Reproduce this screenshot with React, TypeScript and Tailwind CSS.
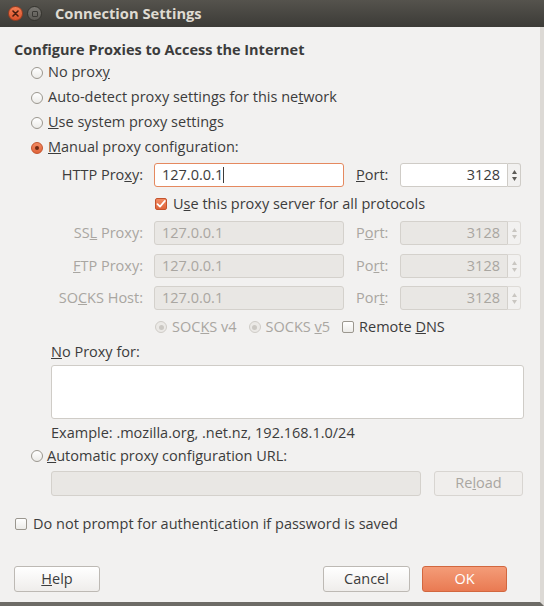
import React from 'react';

const font = { fontFamily: '"Open Sans", "Noto Sans", sans-serif' };

const Radio: React.FC<{ checked?: boolean; disabled?: boolean }> = ({ checked, disabled }) => {
  if (checked) {
    return (
      <span className="w-[12px] h-[12px] rounded-full border border-[#c4532c] bg-gradient-to-b from-[#f28a62] to-[#e0643a] flex items-center justify-center shrink-0">
        <span className="w-[4px] h-[4px] rounded-full bg-[#6e2a14]" />
      </span>
    );
  }
  return (
    <span
      className={`w-[12px] h-[12px] rounded-full border shrink-0 flex items-center justify-center ${
        disabled ? 'border-[#cfccc7] bg-[#ebe9e6]' : 'border-[#9b978f] bg-gradient-to-b from-white to-[#ecebe8]'
      }`}
    >
      {disabled && <span className="w-[5px] h-[5px] rounded-full bg-[#cbc8c3]" />}
    </span>
  );
};

const Checkbox: React.FC<{ checked?: boolean }> = ({ checked }) => {
  if (checked) {
    return (
      <span className="w-[12px] h-[12px] rounded-[2px] border border-[#c4532c] bg-gradient-to-b from-[#f28a62] to-[#e0643a] flex items-center justify-center shrink-0">
        <svg width="10" height="10" viewBox="0 0 10 10">
          <path d="M1.5 5.2 L4 7.6 L8.8 2" fill="none" stroke="#fff" strokeWidth="1.8" strokeLinecap="round" strokeLinejoin="round" />
        </svg>
      </span>
    );
  }
  return <span className="block w-[12px] h-[12px] rounded-[2px] border border-[#9b978f] bg-gradient-to-b from-white to-[#ecebe8] shrink-0" />;
};

const Spinner: React.FC<{ disabled?: boolean }> = ({ disabled }) => (
  <div
    className={`w-[13px] h-full flex flex-col items-center justify-center gap-[3px] rounded-r-[3px] border border-l-0 ${
      disabled ? 'border-[#dedbd7] text-[#c9c6c1]' : 'border-[#cfccc7] text-[#5c5a56]'
    }`}
  >
    <svg width="5" height="4" viewBox="0 0 5 4"><path d="M0 4 L2.5 0 L5 4Z" fill="currentColor" /></svg>
    <svg width="5" height="4" viewBox="0 0 5 4"><path d="M0 0 L2.5 4 L5 0Z" fill="currentColor" /></svg>
  </div>
);

const ProxyRow: React.FC<{ label: React.ReactNode; port: React.ReactNode; mt: string }> = ({ label, port, mt }) => (
  <div className={`flex items-center h-[24px] ${mt}`}>
    <div className="w-[129px] text-right text-[#a9a6a1]">{label}</div>
    <div className="ml-[11px] w-[190px] h-full rounded-[3px] border border-[#d4d1cc] bg-[#e9e7e4] flex items-center px-[7px] text-[#a9a6a1]">
      127.0.0.1
    </div>
    <div className="ml-[12px] w-[44px] text-[#a9a6a1]">{port}</div>
    <div className="w-[108px] h-full rounded-l-[3px] border border-[#d4d1cc] bg-[#e9e7e4] flex items-center justify-end px-[7px] text-[#a9a6a1]">
      3128
    </div>
    <Spinner disabled />
  </div>
);

const Button: React.FC<{ children: React.ReactNode; width: string; primary?: boolean }> = ({ children, width, primary }) => (
  <div
    className={`${width} h-[26px] rounded-[3px] border flex items-center justify-center ${
      primary
        ? 'border-[#d2673f] bg-gradient-to-b from-[#f49c78] to-[#e97a52] text-white'
        : 'border-[#bdb9b4] bg-gradient-to-b from-white to-[#efedeb] text-[#3c3c3c]'
    }`}
  >
    {children}
  </div>
);

export default function App() {
  return (
    <div style={font} className="w-[544px] h-[606px] bg-[#f2f1f0] text-[14.5px] text-[#3c3c3c] flex flex-col overflow-hidden leading-none">
      <div className="h-[27px] shrink-0 bg-gradient-to-b from-[#55534d] to-[#3c3b37] flex items-center">
        <span className="ml-[8px] w-[15px] h-[15px] rounded-full bg-gradient-to-b from-[#f37d53] to-[#d9512a] border border-[#9a3d20] flex items-center justify-center">
          <svg width="7" height="7" viewBox="0 0 7 7">
            <path d="M1 1 L6 6 M6 1 L1 6" stroke="#4a1d0e" strokeWidth="1.6" strokeLinecap="round" />
          </svg>
        </span>
        <span className="ml-[4px] w-[15px] h-[15px] rounded-full bg-gradient-to-b from-[#7a7873] to-[#5c5a55] border border-[#35342f] flex items-center justify-center">
          <span className="w-[6px] h-[6px] border border-[#3a3935] rounded-[1px]" />
        </span>
        <span className="ml-[13px] font-bold text-[#dfdbd2] text-[14.7px]">Connection Settings</span>
      </div>

      <div className="flex-1 flex border-r-[4px] border-r-[#dcd9d5] border-b-[4px] border-b-[#6d6b66]">
        <div className="flex-1 flex flex-col pl-[14px] pt-[13px]">
          <div className="h-[20px] flex items-center font-bold">Configure Proxies to Access the Internet</div>

          <div className="pl-[17px]">
            <div className="h-[25px] flex items-center gap-[5px]">
              <Radio />
              <span>No prox<u>y</u></span>
            </div>
            <div className="h-[25px] flex items-center gap-[5px]">
              <Radio />
              <span>Auto-detect proxy settings for this ne<u>t</u>work</span>
            </div>
            <div className="h-[25px] flex items-center gap-[5px]">
              <Radio />
              <span><u>U</u>se system proxy settings</span>
            </div>
            <div className="h-[25px] flex items-center gap-[5px]">
              <Radio checked />
              <span><u>M</u>anual proxy configuration:</span>
            </div>
          </div>

          <div className="flex items-center h-[24px] mt-[3px]">
            <div className="w-[129px] text-right">HTTP Pro<u>x</u>y:</div>
            <div className="ml-[11px] w-[190px] h-full rounded-[3px] border border-[#e5895f] bg-white flex items-center px-[7px]">
              127.0.0.1<span className="w-px h-[16px] bg-[#3c3c3c]" />
            </div>
            <div className="ml-[12px] w-[44px]"><u>P</u>ort:</div>
            <div className="w-[108px] h-full rounded-l-[3px] border border-[#cfccc7] bg-white flex items-center justify-end px-[7px]">3128</div>
            <Spinner />
          </div>

          <div className="h-[34px] flex items-center gap-[6px] pl-[141px]">
            <Checkbox checked />
            <span>U<u>s</u>e this proxy server for all protocols</span>
          </div>

          <ProxyRow label={<>SS<u>L</u> Proxy:</>} port={<>P<u>o</u>rt:</>} mt="mt-0" />
          <ProxyRow label={<><u>F</u>TP Proxy:</>} port={<>Po<u>r</u>t:</>} mt="mt-[9px]" />
          <ProxyRow label={<>SO<u>C</u>KS Host:</>} port={<>Por<u>t</u>:</>} mt="mt-[8px]" />

          <div className="h-[34px] flex items-center pl-[141px] text-[#a9a6a1]">
            <Radio disabled />
            <span className="ml-[5px]">SOC<u>K</u>S v4</span>
            <span className="ml-[12px] flex"><Radio disabled /></span>
            <span className="ml-[5px]">SOCKS <u>v</u>5</span>
            <span className="ml-[12px] flex"><Checkbox /></span>
            <span className="ml-[5px] text-[#3c3c3c]">Remote <u>D</u>NS</span>
          </div>

          <div className="h-[16px] flex items-center pl-[37px]"><span><u>N</u>o Proxy for:</span></div>
          <div className="ml-[37px] mt-[5px] w-[473px] h-[54px] rounded-[3px] border border-[#cfccc7] bg-white" />
          <div className="h-[28px] flex items-center pl-[37px]">Example: .mozilla.org, .net.nz, 192.168.1.0/24</div>

          <div className="h-[18px] flex items-center gap-[4px] pl-[17px]">
            <Radio />
            <span><u>A</u>utomatic proxy configuration URL:</span>
          </div>
          <div className="flex items-center h-[25px] mt-[6px] pl-[37px]">
            <div className="w-[370px] h-full rounded-[3px] border border-[#d4d1cc] bg-[#e9e7e4]" />
            <div className="ml-[13px] w-[89px] h-full rounded-[3px] border border-[#d8d5d1] bg-[#f0eeec] flex items-center justify-center text-[#a9a6a1]">
              Re<u>l</u>oad
            </div>
          </div>

          <div className="h-[28px] mt-[14px] flex items-center gap-[6px] pl-[1px]">
            <Checkbox />
            <span>Do not prompt for authent<u>i</u>cation if password is saved</span>
          </div>

          <div className="flex items-center mt-[28px]">
            <Button width="w-[86px]"><u>H</u>elp</Button>
            <div className="ml-[223px]"><Button width="w-[87px]">Cancel</Button></div>
            <div className="ml-[12px]"><Button width="w-[85px]" primary>OK</Button></div>
          </div>
        </div>
      </div>
    </div>
  );
}
